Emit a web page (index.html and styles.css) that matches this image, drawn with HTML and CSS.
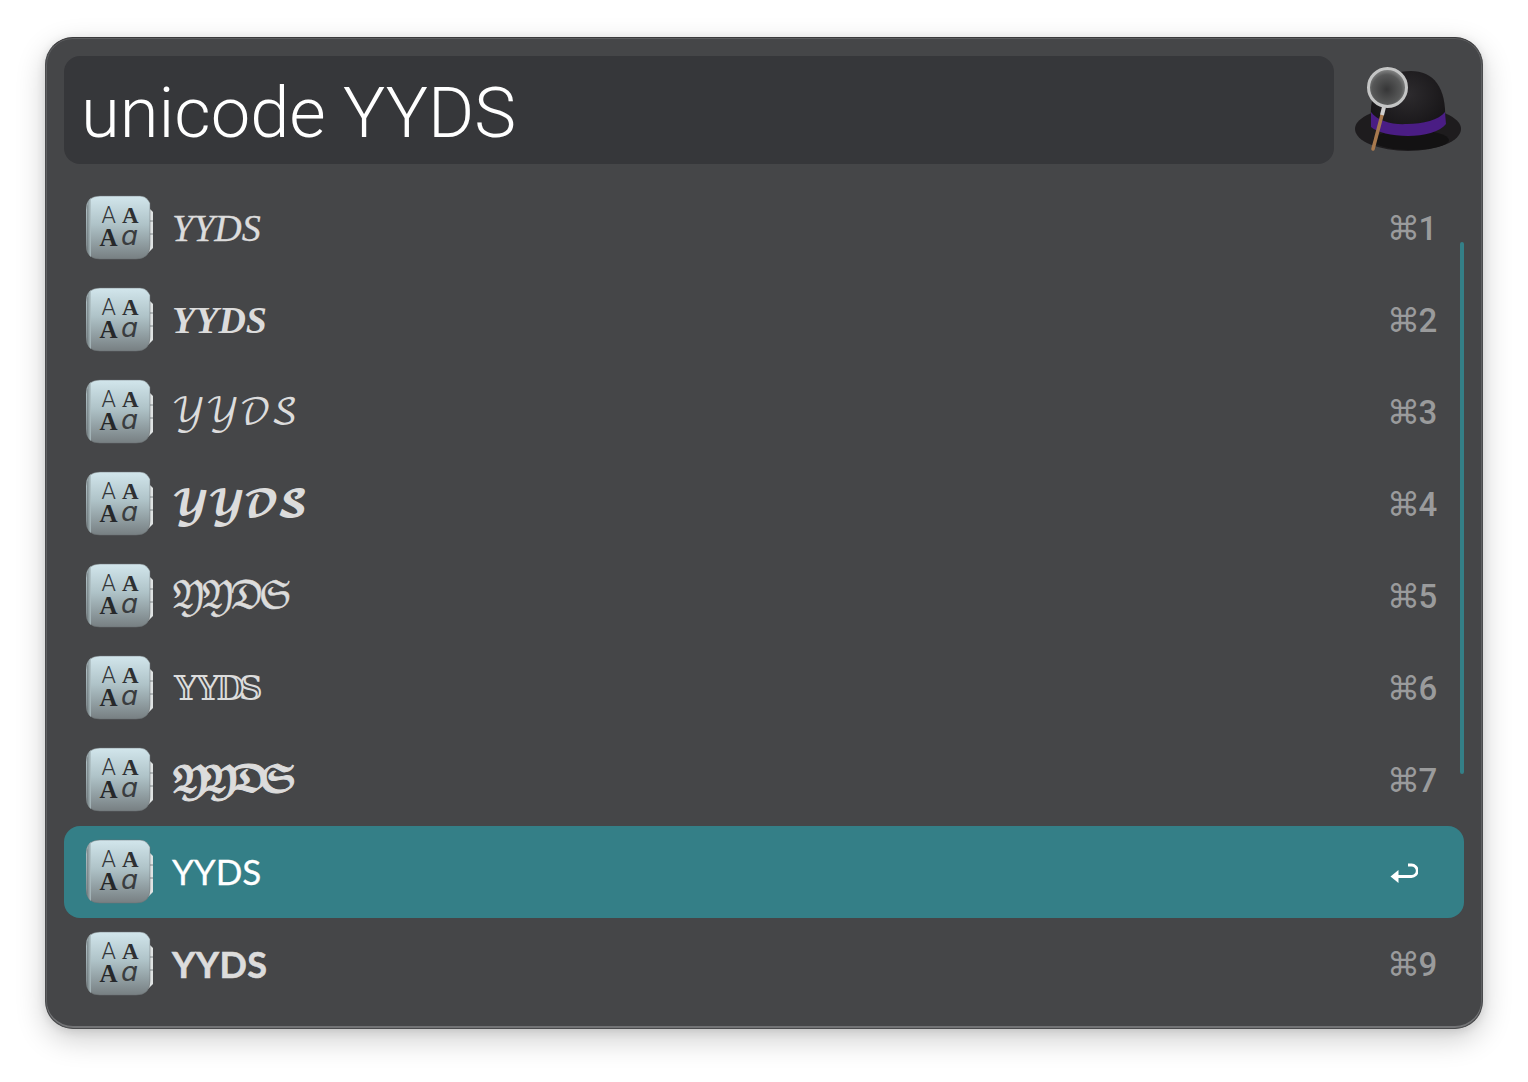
FILE: index.html
```html
<!DOCTYPE html>
<html lang="en">
<head>
<meta charset="utf-8">
<title>Alfred</title>
<link rel="stylesheet" href="styles.css">
</head>
<body>
<svg class="defs" width="0" height="0" aria-hidden="true">
  <defs>
    <linearGradient id="bookFace" x1="0" y1="0" x2="0" y2="1">
      <stop offset="0" stop-color="#d2e6ec"/>
      <stop offset=".45" stop-color="#afc3c8"/>
      <stop offset="1" stop-color="#777f82"/>
    </linearGradient>
    <linearGradient id="bookSide" x1="0" y1="0" x2="1" y2="0">
      <stop offset="0" stop-color="#6a7477"/>
      <stop offset="1" stop-color="#b4c6ca"/>
    </linearGradient>
    <radialGradient id="crown" cx=".5" cy=".35" r=".7">
      <stop offset="0" stop-color="#2d2b2e"/>
      <stop offset="1" stop-color="#121012"/>
    </radialGradient>
    <radialGradient id="lens" cx=".48" cy=".55" r=".55">
      <stop offset="0" stop-color="#363637"/>
      <stop offset=".7" stop-color="#575858"/>
      <stop offset="1" stop-color="#8f9090"/>
    </radialGradient>
    <symbol id="fontbook" viewBox="0 0 68 66">
      <path d="M60 10l7 7v36l-5 5z" fill="#dfe3e3"/>
      <path d="M64 26h3M64 39h3" stroke="#80888a" stroke-width="1"/>
      <path d="M14 1h40q5 0 8 4l2 3v42q0 14-14 14H14Q0 64 0 50V15Q0 1 14 1z" fill="url(#bookFace)" stroke="#6b7173" stroke-opacity=".5"/>
      <path d="M1 11v43q1 6 4 8V3Q2 5 1 11z" fill="url(#bookSide)" opacity=".8"/>
      <text class="fb-thin" x="15.500" y="28">A</text>
      <text class="fb-bold" x="36" y="28">A</text>
      <text class="fb-heavy" x="13.500" y="51">A</text>
      <text class="fb-ital" x="35" y="50">ɑ</text>
    </symbol>
  </defs>
</svg>
<main class="window">
  <header class="top">
    <div class="query">unicode YYDS</div>
    <svg class="hat" viewBox="0 0 110 90" aria-hidden="true">
      <ellipse cx="55" cy="63" rx="53" ry="22" fill="#1e1c1e"/>
      <ellipse cx="58" cy="74" rx="38" ry="10" fill="#131213"/>
      <path d="M18 50C16 24 32 5 58 5c22 0 36 16 34 50-6 12-24 16-38 16-16 0-32-6-36-21z" fill="url(#crown)"/>
      <path d="M18 46c6 9 22 13 36 12 16 0 32-4 38-12l1 12c-6 8-22 12-38 12-16 0-32-4-37-9z" fill="#4a1d84"/>
      <path d="M29 49L20 83" stroke="#a8794e" stroke-width="3.500" stroke-linecap="round"/>
      <path d="M31 41l-2 8" stroke="#cfcfcf" stroke-width="4"/>
      <circle cx="34.500" cy="21.500" r="19" fill="url(#lens)" stroke="#c4c5c5" stroke-width="3"/>
    </svg>
  </header>
  <ol class="results">
    <li class="row"><svg class="icon"><use href="#fontbook"/></svg><span class="label f-ital">YYDS</span><span class="key">⌘1</span></li>
    <li class="row"><svg class="icon"><use href="#fontbook"/></svg><span class="label f-boldital">YYDS</span><span class="key">⌘2</span></li>
    <li class="row"><svg class="icon"><use href="#fontbook"/></svg><span class="label f-math f-s3">𝒴𝒴𝒟𝒮</span><span class="key">⌘3</span></li>
    <li class="row"><svg class="icon"><use href="#fontbook"/></svg><span class="label f-math f-s4">𝓨𝓨𝓓𝓢</span><span class="key">⌘4</span></li>
    <li class="row"><svg class="icon"><use href="#fontbook"/></svg><span class="label f-math f-s5">𝔜𝔜𝔇𝔖</span><span class="key">⌘5</span></li>
    <li class="row"><svg class="icon"><use href="#fontbook"/></svg><span class="label f-math f-s6">𝕐𝕐𝔻𝕊</span><span class="key">⌘6</span></li>
    <li class="row"><svg class="icon"><use href="#fontbook"/></svg><span class="label f-math f-s7">𝖄𝖄𝕯𝕾</span><span class="key">⌘7</span></li>
    <li class="row is-selected"><svg class="icon"><use href="#fontbook"/></svg><span class="label">YYDS</span>
      <svg class="enter" viewBox="0 0 28 24" aria-hidden="true"><path d="M18 3h3.500a4.800 4.800 0 0 1 0 11.500H6" fill="none" stroke="#fff" stroke-width="2.800"/><path d="M0.500 14.500l8-6.500v13z" fill="#fff"/></svg>
    </li>
    <li class="row"><svg class="icon"><use href="#fontbook"/></svg><span class="label f-bold">YYDS</span><span class="key">⌘9</span></li>
  </ol>
  <div class="scrollbar"></div>
</main>
</body>
</html>
```

FILE: styles.css
```css
* { box-sizing: border-box; }
html, body { margin: 0; height: 100%; }
body {
  background: #fff;
  padding: 37px 45px 0;
  font-family: "Inter", "Liberation Sans", sans-serif;
  overflow: hidden;
}
.defs { position: absolute; }
.window {
  position: relative;
  width: 1438px;
  height: 992px;
  padding: 18px 18px 0 18px;
  background: #454648;
  border-radius: 28px;
  border: 1px solid #4a4b4d;
  border-top-color: #3a3a3c;
  box-shadow: inset 0 1px 0 #5c5d5f, inset 0 -2px 0 #737476, inset -1px 0 0 #5e5f61, inset 1px 0 0 #5e5f61, 0 10px 30px rgba(0,0,0,.2), 0 2px 10px rgba(0,0,0,.1);
}
.top { display: flex; align-items: center; height: 108px; }
.query {
  width: 1270px;
  height: 108px;
  padding-left: 17px;
  background: #36373a;
  border-radius: 16px;
  color: #fff;
  font-family: "Roboto", sans-serif;
  font-weight: 300;
  font-size: 70.5px;
  line-height: 115px;
}
.hat { width: 110px; height: 90px; margin-left: 19px; margin-top: 2px; flex: none; }
.results { list-style: none; margin: 18px 0 0; padding: 0; width: 1400px; }
.row {
  display: flex;
  align-items: center;
  height: 92px;
  padding-left: 22px;
  border-radius: 16px;
  color: #dcdcdc;
}
.row.is-selected { background: #347f87; color: #fff; }
.icon { width: 68px; height: 66px; flex: none; }
.label {
  flex: 1;
  margin-left: 18px;
  font-family: "Lato", "DejaVu Sans", sans-serif;
  font-size: 35px;
  line-height: 40px;
}
.is-selected .label { margin-top: -2px; -webkit-text-stroke: .3px #fff; }
.f-ital { font-family: "Liberation Serif", serif; font-style: italic; font-size: 38px; -webkit-text-stroke: .3px #dcdcdc; }
.f-boldital { font-family: "Liberation Serif", serif; font-style: italic; font-weight: 700; font-size: 38px; }
.f-bold { font-family: "Lato", sans-serif; font-weight: 700; font-size: 36px; letter-spacing: .4px; -webkit-text-stroke: .6px #dcdcdc; margin-top: -1px; }
.f-math { font-family: "DejaVu Math TeX Gyre", "DejaVu Serif", "DejaVu Sans", serif; margin-left: 17px; margin-top: 4px; }
.f-s3 { letter-spacing: -.5px; }
.f-s4 { letter-spacing: -2.500px; }
.f-s5 { letter-spacing: -5px; -webkit-text-stroke: .5px #dcdcdc; }
.f-s6 { letter-spacing: -8px; font-size: 33.500px; }
.f-s7 { letter-spacing: -9.500px; font-size: 34.500px; -webkit-text-stroke: 1px #dcdcdc; }
.key {
  width: 77px;
  flex: none;
  margin-top: 1px;
  color: #9a9b9c;
  font-family: "Roboto", "DejaVu Sans", sans-serif;
  font-size: 33px;
  font-weight: 500;
  letter-spacing: -1.500px;
}
.enter { width: 28px; height: 24px; margin-right: 46px; margin-top: 3px; flex: none; }
.scrollbar {
  position: absolute;
  left: 1414px;
  top: 204px;
  width: 4px;
  height: 532px;
  background: #347f87;
  border-radius: 2px;
}
.fb-thin { font: 300 23px "Roboto", sans-serif; fill: #34373a; }
.fb-bold { font: 700 23px "Liberation Serif", serif; fill: #2e3032; }
.fb-heavy { font: 700 25px "Liberation Serif", serif; fill: #26282a; }
.fb-ital { font: italic 400 27px "DejaVu Sans", sans-serif; fill: #3a3d3f; }
```
